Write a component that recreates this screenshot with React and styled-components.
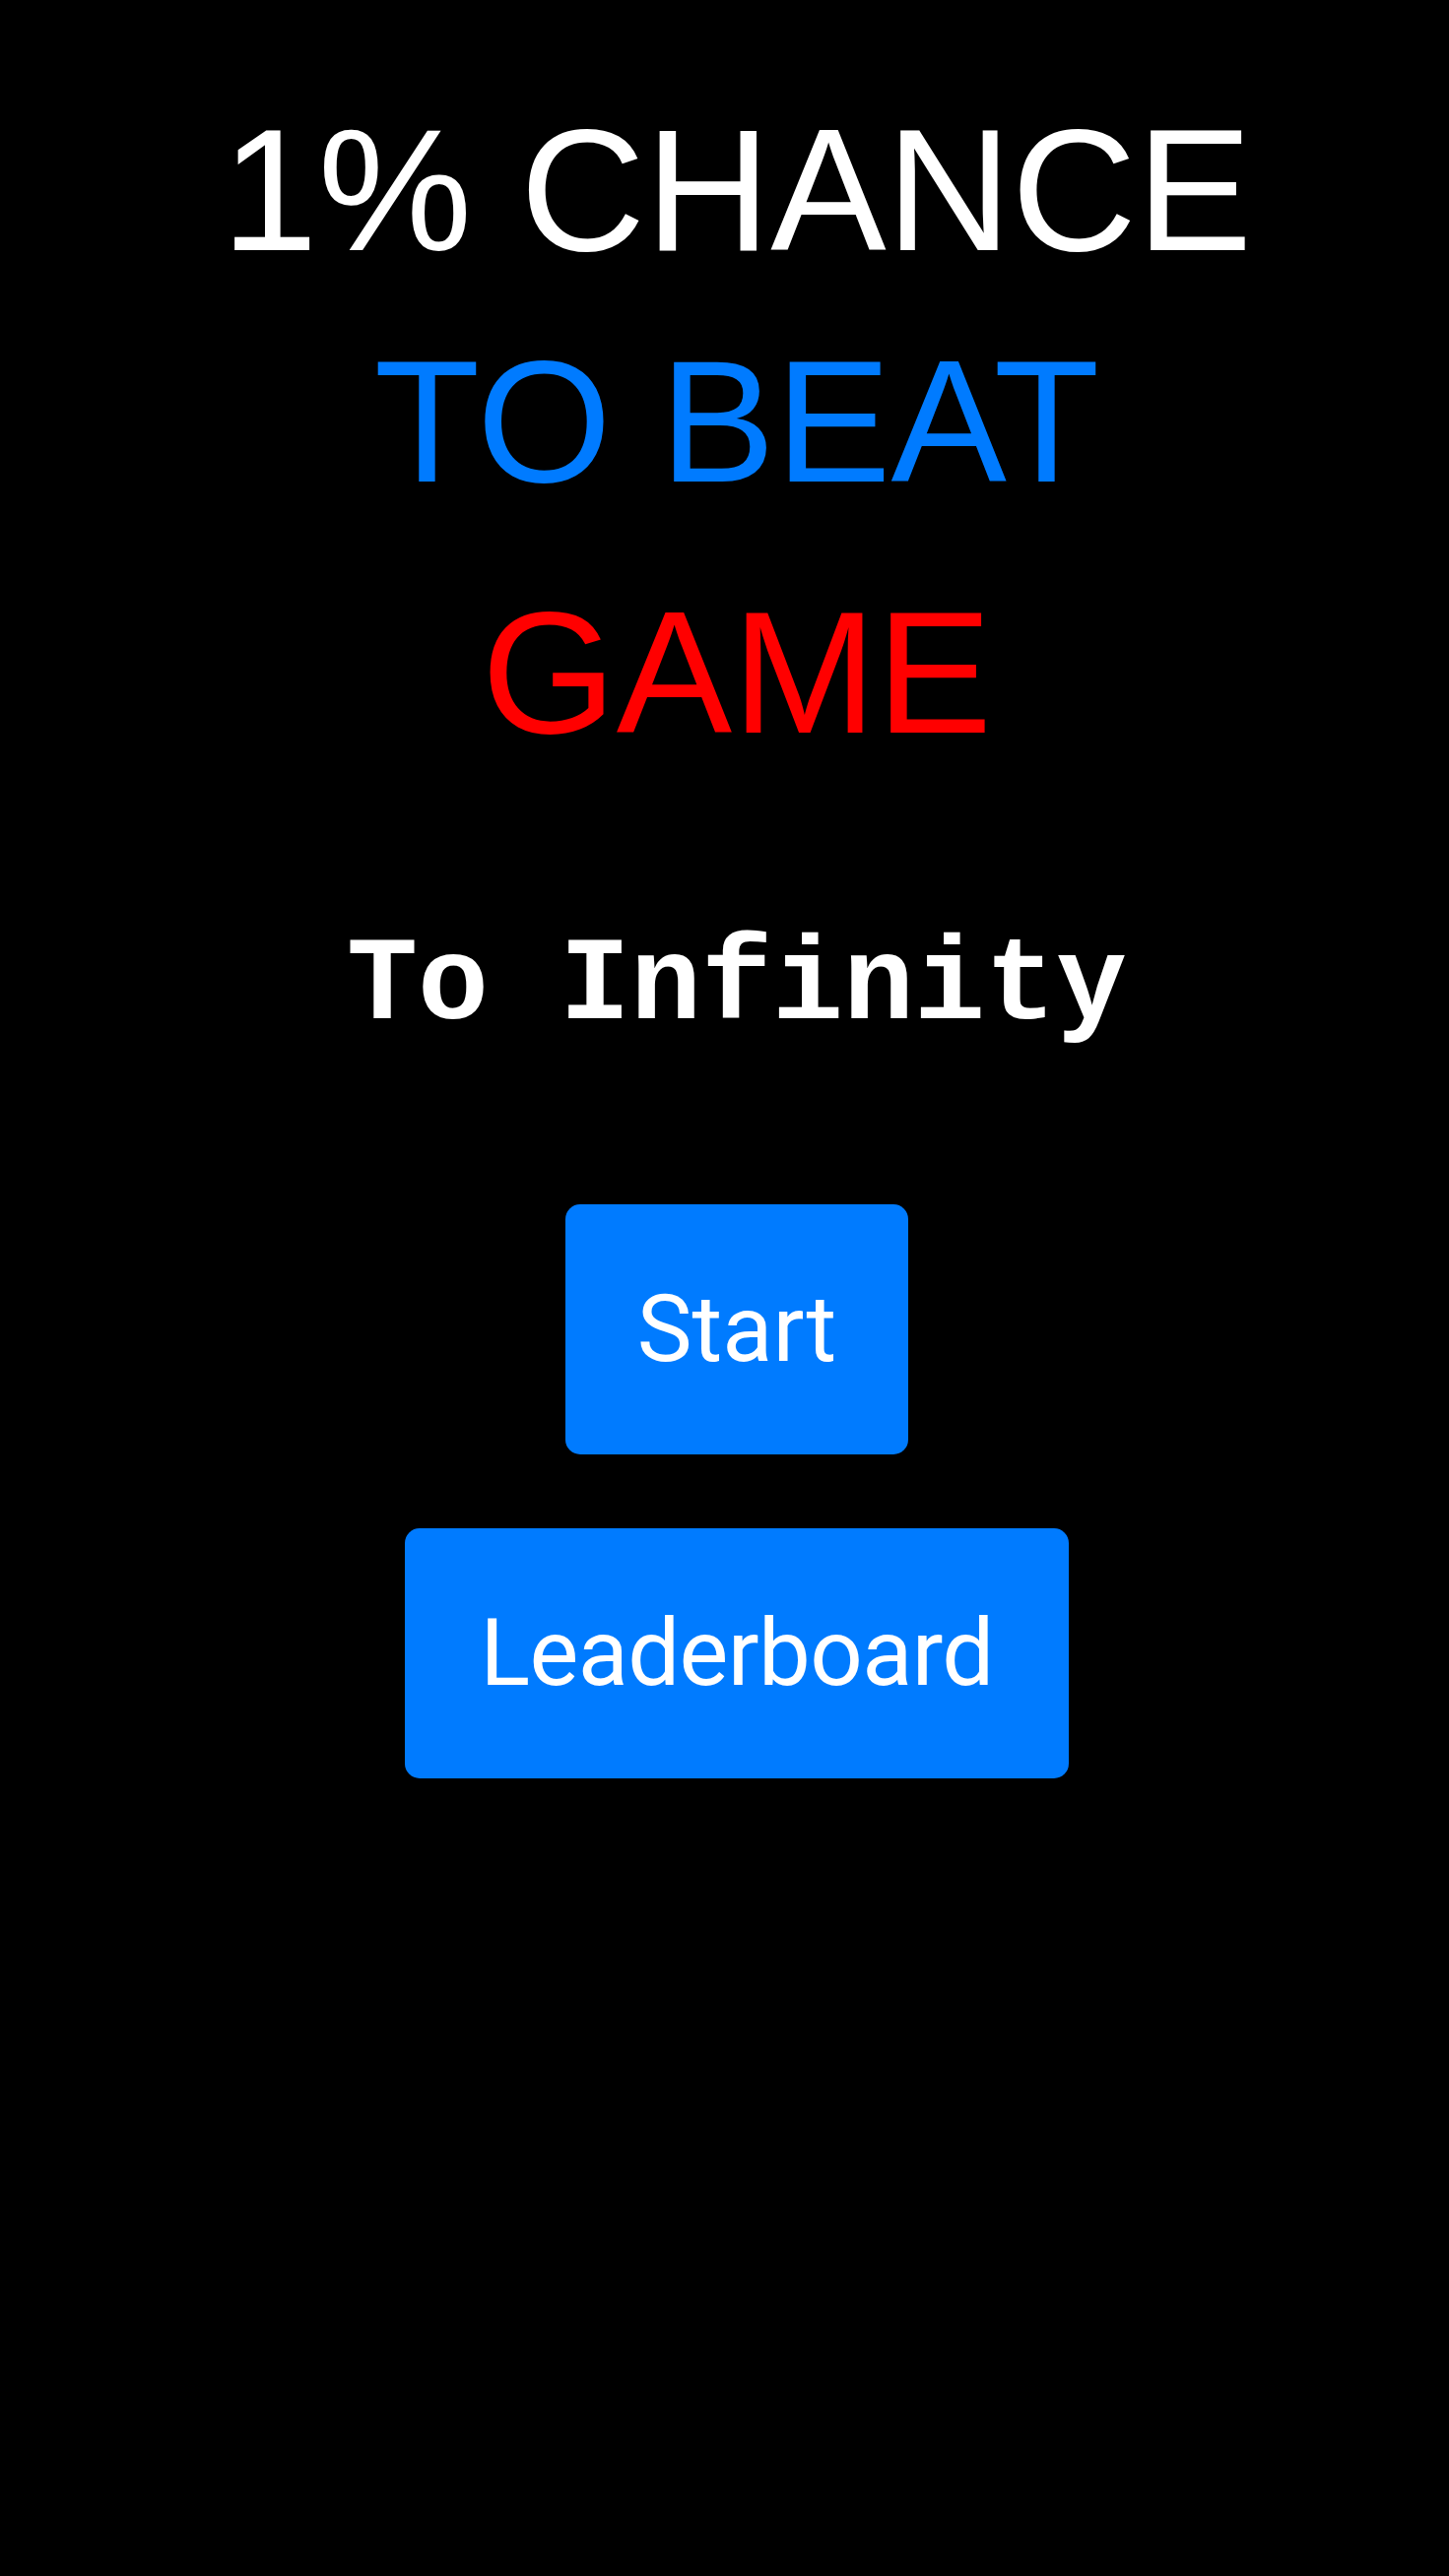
import React from "react";
import styled, { createGlobalStyle } from "styled-components";

const GlobalStyle = createGlobalStyle`
  html,
  body {
    margin: 0;
    padding: 0;
    background: #000;
    min-height: 100%;
  }
`;

const Screen = styled.main`
  min-height: 100vh;
  background: #000;
  display: flex;
  flex-direction: column;
  align-items: center;
  padding: 105px 0 0 25px;
  box-sizing: border-box;
`;

const TitleLine = styled.h1`
  margin: ${(p) => p.$gap || 0}px 0 0;
  font-family: "Liberation Sans", Arial, sans-serif;
  font-weight: 400;
  font-size: 176px;
  line-height: 1;
  color: ${(p) => p.$color};
  white-space: nowrap;
`;

const Tagline = styled.h2`
  margin: 171px 0 0;
  font-family: "Liberation Mono", "Courier New", monospace;
  font-weight: 700;
  font-size: 120px;
  line-height: 1;
  color: #fff;
  white-space: nowrap;
`;

const Menu = styled.nav`
  margin-top: 161px;
  display: flex;
  flex-direction: column;
  align-items: center;
  gap: 75px;
`;

const MenuButton = styled.button`
  border: none;
  border-radius: 15px;
  background: #007bff;
  color: #fff;
  font-family: Roboto, "Noto Sans", sans-serif;
  font-weight: 400;
  font-size: 94px;
  line-height: 1;
  letter-spacing: ${(p) => (p.$tight ? "-0.6px" : "0")};
  padding: 80px ${(p) => p.$padX}px;
  cursor: pointer;
`;

export default function App() {
  return (
    <>
      <GlobalStyle />
      <Screen>
        <TitleLine $color="#ffffff">1% CHANCE</TitleLine>
        <TitleLine $color="#007bff" $gap={59}>
          TO BEAT
        </TitleLine>
        <TitleLine $color="#ff0000" $gap={79}>
          GAME
        </TitleLine>
        <Tagline>To Infinity</Tagline>
        <Menu>
          <MenuButton $padX={73}>Start</MenuButton>
          <MenuButton $padX={76} $tight>
            Leaderboard
          </MenuButton>
        </Menu>
      </Screen>
    </>
  );
}
